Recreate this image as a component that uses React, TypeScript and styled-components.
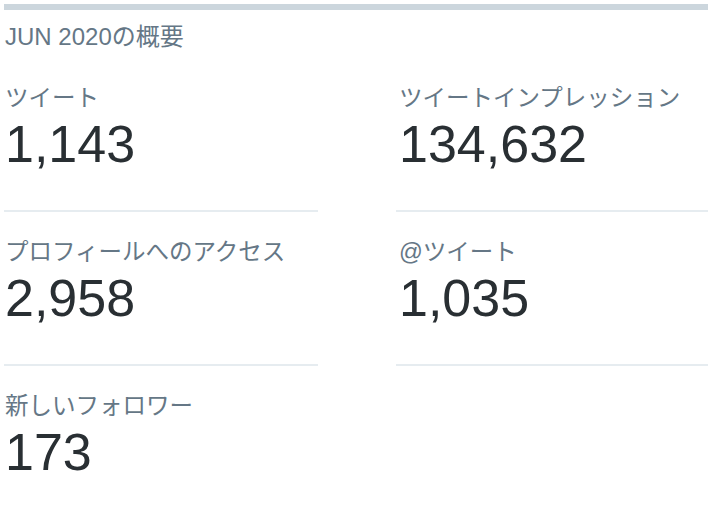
import styled, { createGlobalStyle } from 'styled-components';

const colors = {
  bar: '#ccd6dd',
  divider: '#e6ecf0',
  label: '#657786',
  value: '#292f33',
};

const GlobalStyle = createGlobalStyle`
  html, body {
    margin: 0;
    padding: 0;
    background: #ffffff;
  }
  body {
    font-family: "Liberation Sans", "Noto Sans CJK JP", sans-serif;
  }
`;

const Page = styled.div`
  padding: 4px 16px 0 4px;
  width: 704px;
`;

const TopBar = styled.div`
  height: 6px;
  background: ${colors.bar};
`;

const Heading = styled.h2`
  margin: 13px 0 7px 1px;
  font-size: 24px;
  line-height: 28px;
  font-weight: normal;
  color: ${colors.label};
`;

const Grid = styled.div`
  display: grid;
  grid-template-columns: 314px 312px;
  column-gap: 78px;
`;

const Cell = styled.div<{ $divider: boolean }>`
  padding: 26px 0 ${(p) => (p.$divider ? '38px' : '0')};
  border-bottom: ${(p) => (p.$divider ? `2px solid ${colors.divider}` : 'none')};
  &:nth-child(even) > * { padding-left: 3px; }
  &:nth-child(odd) > * { padding-left: 1px; }
`;

const Label = styled.div`
  font-size: 23.5px;
  line-height: 28px;
  color: ${colors.label};
`;

const Value = styled.div`
  margin-top: 4px;
  font-size: 52px;
  line-height: 56px;
  color: ${colors.value};
`;

interface Stat {
  label: string,
  value: string,
};

const stats: Stat[] = [
  { label: 'ツイート', value: '1,143' },
  { label: 'ツイートインプレッション', value: '134,632' },
  { label: 'プロフィールへのアクセス', value: '2,958' },
  { label: '@ツイート', value: '1,035' },
  { label: '新しいフォロワー', value: '173' },
];

const App = (): JSX.Element => {
  return (
    <Page>
      <GlobalStyle />
      <TopBar />
      <Heading>JUN 2020の概要</Heading>
      <Grid>
        { stats.map((stat: Stat, index: number) => (
          <Cell key={`stat-${index}`} $divider={index < 4}>
            <Label>{stat.label}</Label>
            <Value>{stat.value}</Value>
          </Cell>
        )) }
      </Grid>
    </Page>
  );
};

export default App;
